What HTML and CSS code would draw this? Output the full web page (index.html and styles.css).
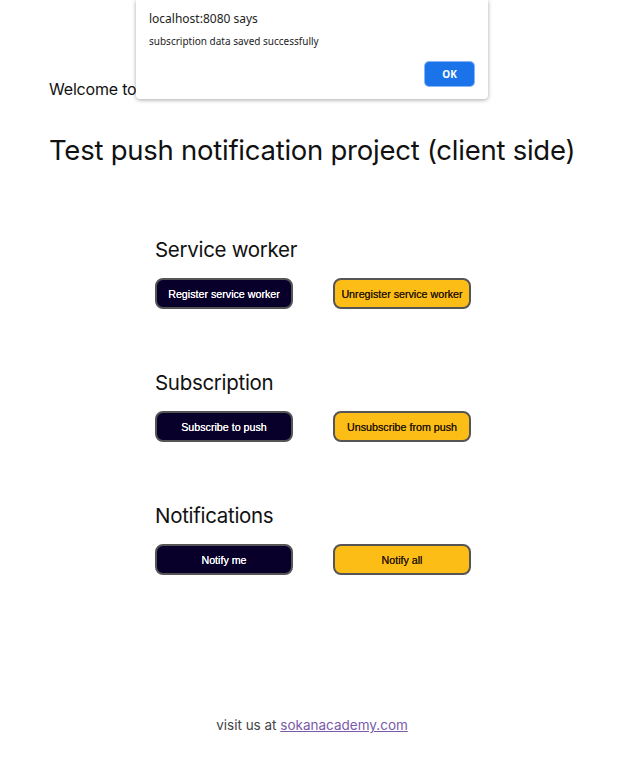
FILE: index.html
```html
<!DOCTYPE html>
<html>
<head>
<meta charset="utf-8">
<link rel="stylesheet" href="styles.css">
</head>
<body>
<main class="page">
  <p class="welcome">Welcome to sokanacademy</p>
  <h1 class="title">Test push notification project (client side)</h1>
  <section class="group">
    <h2 class="group-title">Service worker</h2>
    <div class="btn-row">
      <button class="btn btn-dark">Register service worker</button>
      <button class="btn btn-yellow">Unregister service worker</button>
    </div>
  </section>
  <section class="group">
    <h2 class="group-title">Subscription</h2>
    <div class="btn-row">
      <button class="btn btn-dark">Subscribe to push</button>
      <button class="btn btn-yellow">Unsubscribe from push</button>
    </div>
  </section>
  <section class="group">
    <h2 class="group-title">Notifications</h2>
    <div class="btn-row">
      <button class="btn btn-dark">Notify me</button>
      <button class="btn btn-yellow">Notify all</button>
    </div>
  </section>
  <footer class="footer">visit us at <a href="#" class="footer-link">sokanacademy.com</a></footer>
</main>
<div class="alert">
  <div class="alert-origin">localhost:8080 says</div>
  <div class="alert-msg">subscription data saved successfully</div>
  <div class="alert-actions"><button class="alert-ok">OK</button></div>
</div>
</body>
</html>
```
FILE: styles.css
```css
html, body { margin: 0; padding: 0; background: #fff; }
body { font-family: "Inter", "Noto Sans", sans-serif; color: #111; }
.page { padding: 78px 49px 0 49px; display: flex; flex-direction: column; }
.welcome { margin: 0; font-size: 16px; line-height: 22px; letter-spacing: -0.2px; }
.title { margin: 33px 0 0 0; font-size: 27.5px; font-weight: 400; line-height: 34px; letter-spacing: -0.25px; white-space: nowrap; }
.group { margin-left: 106px; margin-top: 61px; }
.page .group:first-of-type { margin-top: 70px; }
.group-title { margin: 0; font-size: 20.5px; font-weight: 400; line-height: 26px; letter-spacing: -0.3px; }
.btn-row { display: flex; gap: 40px; margin-top: 15px; }
.btn { width: 138px; height: 31px; border-radius: 8px; border: 2px solid #555; font-family: "Liberation Sans", Arial, sans-serif; font-weight: 400; font-size: 10.7px; padding: 0; }
.btn-dark { background: #08002a; color: #fff; text-shadow: 0 0 0.6px #fff; }
.btn-yellow { background: #fdbd17; color: #2a1a00; text-shadow: 0 0 0.6px #2a1a00; }
.footer { margin-top: 142px; text-align: center; font-size: 13.5px; color: #444; }
.footer-link { color: #7a5aa8; }
.alert { position: absolute; left: 136px; top: 0; width: 352px; height: 99px; background: #fff; border-radius: 0 0 4px 4px; box-shadow: 0 1px 4px rgba(0,0,0,0.35); font-family: "Noto Sans", "Liberation Sans", sans-serif; box-sizing: border-box; padding: 11px 13px 0 13px; }
.alert-origin { font-size: 12px; color: #222; line-height: 16px; }
.alert-msg { font-size: 10px; color: #222; margin-top: 7px; line-height: 14px; }
.alert-actions { display: flex; justify-content: flex-end; margin-top: 14px; }
.alert-ok { width: 49px; height: 24px; background: #1a73e8; color: #fff; border: 1px solid #1a73e8; border-radius: 4px; box-shadow: 0 0 0 1px #8ab4f8; font-family: "Noto Sans", "Liberation Sans", sans-serif; font-weight: 700; font-size: 10px; margin-right: 1px; }
```
